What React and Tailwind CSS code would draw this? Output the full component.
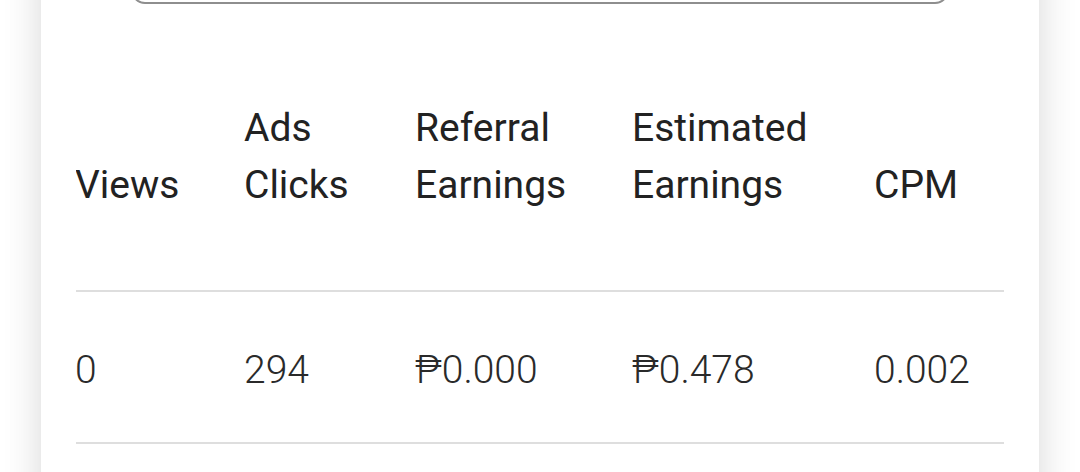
import React from "react";

const headers = [
  ["Views"],
  ["Ads", "Clicks"],
  ["Referral", "Earnings"],
  ["Estimated", "Earnings"],
  ["CPM"],
];

const rows = [["0", "294", "₱0.000", "₱0.478", "0.002"]];

const cols = "grid grid-cols-[169px_171px_217px_242px_128px]";

export default function App() {
  return (
    <div className="h-[472px] bg-white overflow-hidden" style={{ fontFamily: "Roboto, 'Noto Sans', sans-serif" }}>
      <div className="mx-[41px] min-h-[600px] bg-white shadow-[0_0_36px_rgba(0,0,0,0.16)] px-[35px]">
        <div className="mx-[55px] h-[60px] mt-[-56px] border-2 border-[#8e8e8e] rounded-[14px]" />
        <div className="mt-[96px] overflow-hidden">
          <div className={`${cols} items-end border-b-2 border-[#dedede] pb-[76px]`}>
            {headers.map((h, i) => (
              <div key={i} className="text-[39px] leading-[57px] text-[#222] whitespace-nowrap -ml-px">
                {h.map((line, j) => (
                  <div key={j}>{line}</div>
                ))}
              </div>
            ))}
          </div>
          {rows.map((r, i) => (
            <div key={i} className={`${cols} border-b-2 border-[#dedede] pt-[50px] pb-[43px]`}>
              {r.map((c, j) => (
                <div key={j} className="text-[39px] leading-[57px] font-light text-[#2a2a2a] whitespace-nowrap -ml-px">
                  {c}
                </div>
              ))}
            </div>
          ))}
        </div>
      </div>
    </div>
  );
}
